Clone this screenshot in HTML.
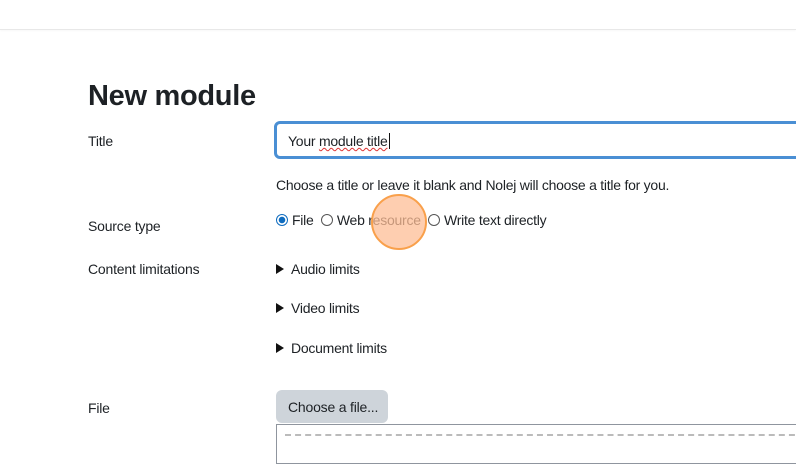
<!DOCTYPE html>
<html><head><meta charset="utf-8"><style>
*{box-sizing:border-box;margin:0;padding:0}
body{width:796px;height:443px;overflow:hidden;background:#fff;font-family:"Liberation Sans",sans-serif;color:#1d2125;position:relative}
.top{position:absolute;left:0;top:0;width:796px;height:30px;border-bottom:1px solid #e8e8e8;background:#fff;box-shadow:0 1px 2px rgba(0,0,0,.03)}
.a{position:absolute;white-space:nowrap}
.lbl{font-size:14px;left:88px;letter-spacing:-0.2px}
.t{font-size:14px;letter-spacing:-0.25px}
h1{position:absolute;left:88px;top:80px;font-size:29px;font-weight:bold;letter-spacing:-0.3px}
.inp{position:absolute;left:274px;top:121px;width:540px;height:38px;border:3px solid #4a8fd4;border-radius:6px;background:#fff}
.radio{display:inline-block;width:12px;height:12px;border:1px solid #555;border-radius:50%;vertical-align:-1px;margin-right:4px;background:#fff}
.radio.on{border:1px solid #0f6cbf;background:radial-gradient(circle,#0f6cbf 3px,#fff 3.5px)}
.tri{display:inline-block;width:0;height:0;border-left:8px solid #111;border-top:5px solid transparent;border-bottom:5px solid transparent;margin-right:7px}
.btn{position:absolute;left:276px;top:390px;width:112px;height:33px;background:#ced4da;border-radius:6px;font-size:14px;padding:9px 0 0 12px;letter-spacing:-0.2px}
.box{position:absolute;left:276px;top:424px;width:540px;height:40px;border:1px solid #8f959e}
.dash{position:absolute;left:285px;top:434px;width:520px;border-top:2px dashed #bbb}
.circ{position:absolute;left:371px;top:194px;width:56px;height:56px;border-radius:50%;background:rgba(253,190,150,.75);border:2px solid #f9a04b}
</style></head><body>
<div class="top"></div>
<h1>New module</h1>
<div class="a lbl" style="top:133px">Title</div>
<div class="inp"></div>
<div class="a t" style="left:288px;top:133px">Your <span style="text-decoration:underline wavy #d33;text-decoration-thickness:1px">module title</span><span style="border-left:1px solid #111;margin-left:1px"></span></div>
<div class="a t" style="left:276px;top:177px">Choose a title or leave it blank and Nolej will choose a title for you.</div>
<div class="a lbl" style="top:218px">Source type</div>
<div class="a t" style="left:276px;top:212px"><span class="radio on"></span>File&nbsp; <span class="radio"></span>Web resource&nbsp; <span class="radio"></span>Write text directly</div>
<div class="circ"></div>
<div class="a lbl" style="top:261px">Content limitations</div>
<div class="a t" style="left:276px;top:261px"><span class="tri"></span>Audio limits</div>
<div class="a t" style="left:276px;top:300px"><span class="tri"></span>Video limits</div>
<div class="a t" style="left:276px;top:340px"><span class="tri"></span>Document limits</div>
<div class="a lbl" style="top:400px">File</div>
<div class="btn">Choose a file...</div>
<div class="box"></div>
<div class="dash"></div>
</body></html>
